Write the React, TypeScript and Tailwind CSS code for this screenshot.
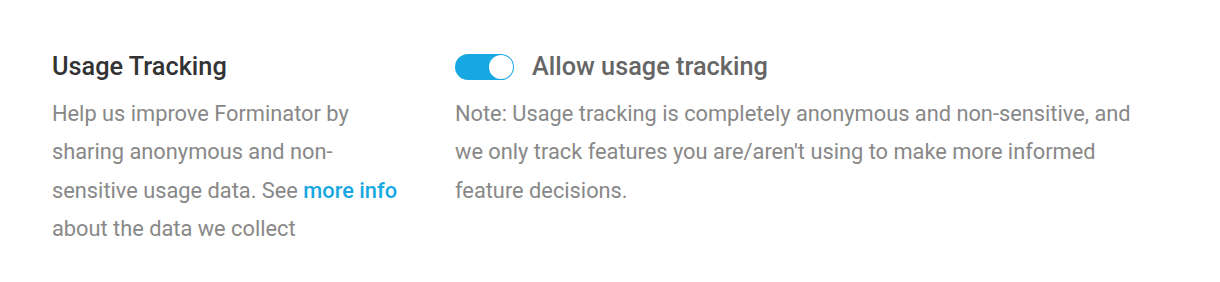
export default function App() {
  return (
    <div className="w-[1220px] h-[282px] bg-white font-['Roboto',sans-serif]">
      <div className="flex pt-[51px] pl-[52px]">
        <div className="w-[360px] shrink-0 mr-[43px]">
          <h3 className="text-[25.3px] leading-[32px] font-medium text-[#333]">Usage Tracking</h3>
          <p className="mt-[12px] text-[21.8px] leading-[38.4px] text-[#888]">
            Help us improve Forminator by sharing anonymous and non-sensitive usage data. See{" "}
            <a href="#" className="font-medium text-[#17a8e3]">more info</a> about the data we collect
          </p>
        </div>
        <div className="w-[694px]">
          <label className="flex items-center gap-[18px] h-[32px]">
            <span className="relative inline-flex items-center w-[59px] h-[26px] rounded-full bg-[#17a8e3]">
              <span className="absolute right-[1px] w-[24px] h-[24px] rounded-full bg-white" />
            </span>
            <span className="text-[25.3px] font-medium text-[#666]">Allow usage tracking</span>
          </label>
          <p className="mt-[12px] text-[21.8px] leading-[38.4px] text-[#888]">
            Note: Usage tracking is completely anonymous and non-sensitive, and we only track features you are/aren't using to make more informed feature decisions.
          </p>
        </div>
      </div>
    </div>
  );
}
